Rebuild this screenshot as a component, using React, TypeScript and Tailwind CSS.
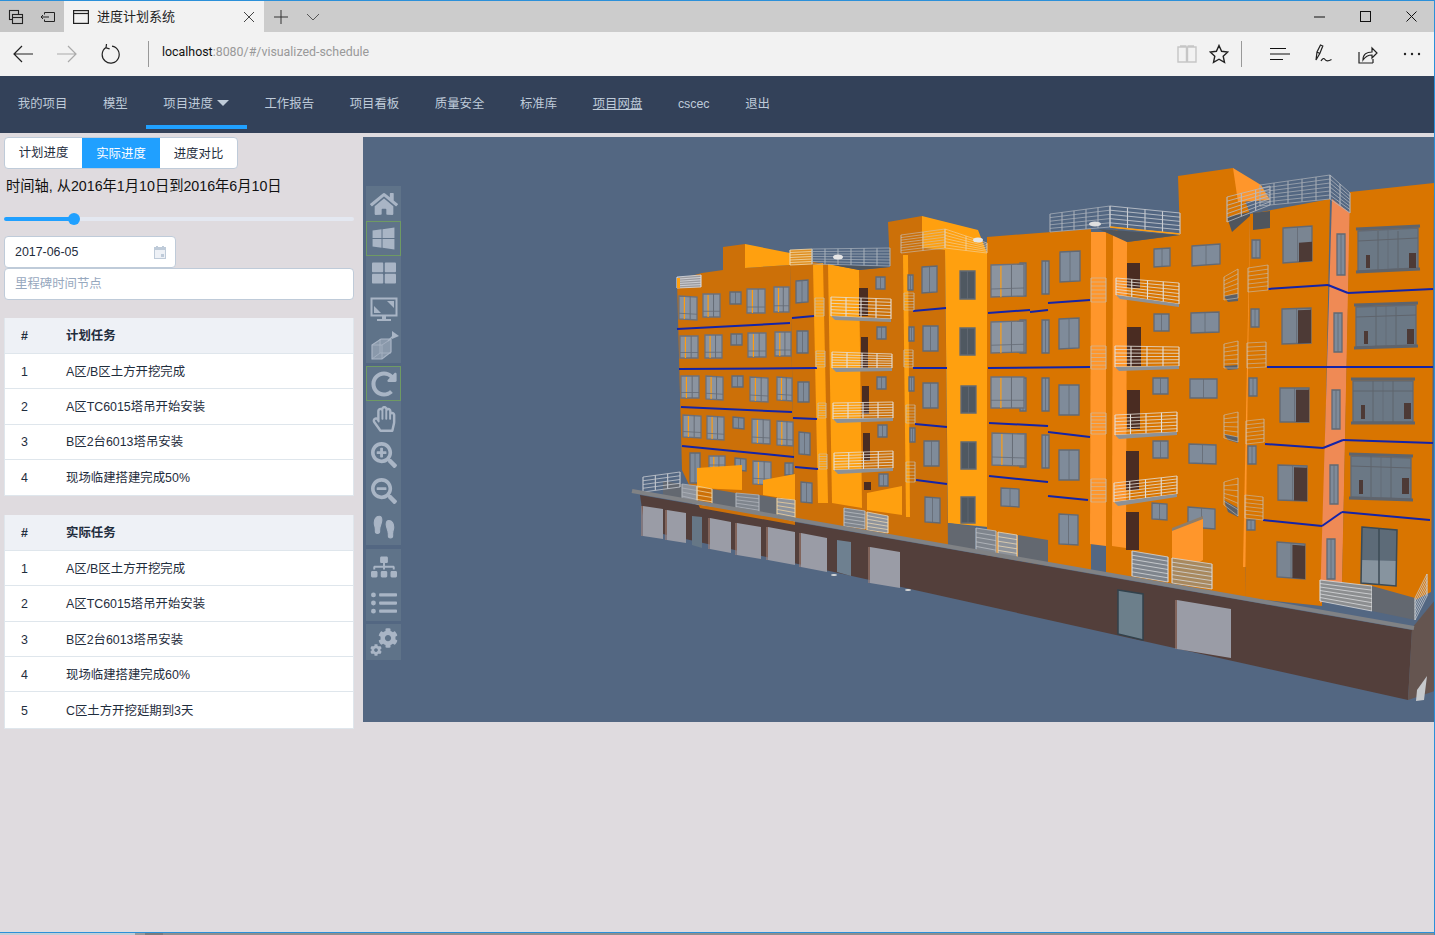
import React from 'react';
import { FaHome, FaWindows, FaThLarge, FaRegHandPaper, FaSearchPlus, FaSearchMinus, FaSitemap, FaListUl, FaCog, FaRedoAlt } from 'react-icons/fa';
import { Footprints } from 'lucide-react';

type Tup = number[];
const DO = '#cc7008', RO = '#d97500', BO = '#ffa00f', BR = '#ff962b', SA = '#ef8a55';
const Poly = ({ p, f, o }: { p: Tup; f: string; o?: number }) => <polygon points={p.join(' ')} fill={f} opacity={o} />;
const Win = ({ x, y, w, h, s = 0, f = '#7f8b9a', d = false, r = false }: { x: number; y: number; w: number; h: number; s?: number; f?: string; d?: boolean; r?: boolean }) => (
  <g>
    <polygon points={`${x},${y} ${x + w},${y + s} ${x + w},${y + h + s} ${x},${y + h}`} fill={f} stroke="#636973" strokeWidth="1.3" />
    {d && <polygon points={`${x + w * 0.55},${y + h * (r ? 0.05 : 0.45) + s * 0.55} ${x + w},${y + h * (r ? 0.05 : 0.45) + s} ${x + w},${y + h + s} ${x + w * 0.55},${y + h + s * 0.55}`} fill="#4d3a36" />}
    <line x1={x + w / 2} y1={y + s / 2} x2={x + w / 2} y2={y + h + s / 2} stroke="#636973" strokeWidth="0.8" />
  </g>
);
const LWin = ({ x, y, w, h, s = 0 }: { x: number; y: number; w: number; h: number; s?: number }) => (
  <g>
    <polygon points={`${x},${y} ${x + w},${y + s} ${x + w},${y + h + s} ${x},${y + h}`} fill="#8b94a0" stroke="#6d7079" strokeWidth="1.3" />
    <line x1={x + w * 0.3} y1={y + 1} x2={x + w * 0.3} y2={y + h} stroke="#ff9d10" strokeWidth="1.2" />
    <line x1={x + w * 0.62} y1={y} x2={x + w * 0.62} y2={y + h} stroke="#666c76" strokeWidth="1" />
    <line x1={x} y1={y + h * 0.75} x2={x + w} y2={y + h * 0.75 + s} stroke="#666c76" strokeWidth="0.8" />
  </g>
);
const Rail = ({ p, n = 6, v = 3, c = '#d9dbe0', b, o = 1 }: { p: Tup; n?: number; v?: number; c?: string; b?: string; o?: number }) => {
  const [x0, y0, x1, y1, x2, y2, x3, y3] = p;
  const out: React.ReactNode[] = [];
  if (b) out.push(<polygon key="b" points={p.join(' ')} fill={b} />);
  for (let i = 0; i <= n; i++) {
    const t = i / n;
    out.push(<line key={'h' + i} x1={x0 + (x3 - x0) * t} y1={y0 + (y3 - y0) * t} x2={x1 + (x2 - x1) * t} y2={y1 + (y2 - y1) * t} stroke={c} strokeWidth="0.8" opacity={o} />);
  }
  for (let i = 0; i <= v; i++) {
    const t = i / v;
    out.push(<line key={'v' + i} x1={x0 + (x1 - x0) * t} y1={y0 + (y1 - y0) * t} x2={x3 + (x2 - x3) * t} y2={y3 + (y2 - y3) * t} stroke={c} strokeWidth="1.1" opacity={o} />);
  }
  return <g>{out}</g>;
};
const Blue = ({ l }: { l: Tup }) => <line x1={l[0]} y1={l[1]} x2={l[2]} y2={l[3]} stroke="#1424a8" strokeWidth="2" />;

const leftWins: Tup[] = [
  [679, 296, 18, 23, 1], [703, 294, 17, 23, 0], [747, 289, 18, 24, 0], [774, 287, 15, 25, 0],
  [680, 336, 18, 22, 0], [705, 335, 17, 23, 0], [748, 333, 18, 24, 0], [775, 332, 16, 24, 0],
  [681, 376, 18, 22, 0], [706, 376, 17, 23, 1], [750, 377, 18, 24, 1], [777, 377, 15, 23, 1],
  [683, 415, 18, 22, 1], [707, 416, 17, 23, 1], [752, 419, 18, 24, 1], [777, 421, 16, 24, 1],
  [753, 461, 18, 23, 1], [709, 456, 16, 12, 0],
];
const plainWins: Tup[] = [
  [730, 292, 11, 12, 0], [731, 334, 11, 11, 0], [732, 376, 11, 11, 0], [733, 417, 11, 11, 1], [735, 458, 11, 12, 1],
  [796, 281, 12, 22, -1], [797, 331, 11, 22, 0], [798, 382, 11, 20, 0], [799, 432, 11, 22, 1], [801, 482, 11, 20, 1],
  [690, 453, 10, 30, 0], [785, 463, 8, 12, 0],
  [876, 277, 9, 12, 0], [877, 327, 9, 12, 0], [877, 377, 9, 12, 0], [878, 425, 9, 12, 0], [879, 474, 9, 12, 0],
  [922, 267, 15, 26, -1], [923, 326, 15, 25, 0], [923, 383, 15, 25, 0], [924, 441, 15, 25, 0], [925, 497, 15, 25, 1],
  [908, 275, 5, 15, 0], [909, 327, 5, 14, 0], [909, 377, 5, 14, 0], [910, 428, 5, 14, 0],
  [1001, 488, 18, 18, 1],
  [1042, 261, 7, 33, 0], [1042, 320, 7, 33, 0], [1042, 378, 7, 33, 0], [1042, 435, 7, 33, 0],
  [1020, 263, 6, 33, 0], [1020, 320, 6, 33, 0], [1020, 378, 6, 33, 0], [1020, 434, 6, 33, 0],
  [1060, 252, 20, 30, -1], [1059, 319, 20, 30, -1], [1059, 385, 20, 30, 0], [1059, 450, 20, 30, 0], [1059, 514, 19, 30, 1],
  [1154, 249, 16, 18, -1], [1154, 314, 15, 17, 0], [1153, 378, 15, 16, 0], [1153, 441, 15, 17, 0], [1152, 503, 15, 16, 1],
  [1192, 246, 28, 20, -2], [1191, 313, 28, 20, -1], [1190, 379, 27, 19, 0], [1189, 444, 27, 19, 1], [1188, 507, 27, 20, 2],
  [1252, 240, 8, 18, 0], [1251, 309, 8, 18, 0], [1249, 378, 8, 18, 0], [1248, 446, 8, 18, 0], [1247, 520, 8, 10, 0],
  [1337, 234, 8, 41, 0], [1334, 313, 8, 39, 0], [1332, 390, 8, 39, 0], [1330, 465, 8, 39, 0], [1327, 539, 8, 40, 0],
];
const darkWins: Tup[] = [[960, 271, 15, 28, 0], [960, 328, 15, 27, 0], [961, 386, 15, 27, 0], [961, 442, 15, 27, 0], [961, 497, 14, 26, 0]];
const bigMid: Tup[] = [[991, 265, 33, 32, -1], [991, 322, 33, 31, -1], [991, 377, 33, 31, 0], [992, 433, 33, 32, 1]];
const medWins: Tup[] = [[1283, 228, 29, 35, -2], [1282, 309, 29, 35, -1], [1280, 388, 29, 34, 0], [1278, 465, 29, 35, 1], [1277, 542, 28, 35, 2]];
const bigWins: Tup[] = [[1358, 231, 60, 40, -3], [1356, 307, 60, 40, -2], [1353, 381, 60, 41, 0], [1351, 456, 60, 41, 2]];
const doors: Tup[] = [
  [859, 288, 9, 28], [861, 337, 7, 32], [862, 386, 7, 28], [863, 433, 7, 28], [864, 482, 7, 8],
  [1127, 263, 13, 25], [1127, 327, 14, 39], [1127, 390, 13, 39], [1126, 451, 13, 39], [1126, 512, 13, 38],
];
const blues: Tup[] = [
  [677, 329, 790, 323], [792, 318, 814, 316], [679, 369, 817, 368], [681, 407, 792, 412], [793, 418, 817, 419], [682, 446, 794, 457], [795, 467, 818, 469],
  [913, 311, 946, 308], [913, 368, 947, 368], [915, 424, 947, 427], [916, 480, 947, 484],
  [988, 313, 1030, 310], [1030, 312, 1048, 310], [1048, 303, 1090, 300], [988, 368, 1090, 367], [989, 423, 1048, 426], [1048, 432, 1090, 437], [989, 476, 1048, 482], [1048, 496, 1088, 500],
  [1268, 289, 1328, 285], [1328, 285, 1348, 293], [1348, 293, 1433, 289], [1267, 367, 1433, 367],
  [1265, 444, 1323, 448], [1323, 448, 1343, 440], [1343, 440, 1433, 443], [1263, 520, 1322, 526], [1322, 526, 1342, 512], [1342, 512, 1430, 520],
];
const balc: Tup[] = [
  [831, 297, 891, 299, 891, 319, 831, 316], [832, 352, 892, 354, 892, 368, 832, 368], [833, 403, 893, 402, 893, 418, 833, 419], [834, 453, 893, 451, 893, 468, 834, 470],
  [1116, 278, 1179, 283, 1179, 304, 1116, 295], [1115, 346, 1179, 347, 1179, 366, 1115, 367], [1115, 415, 1177, 412, 1177, 432, 1115, 435], [1114, 483, 1177, 476, 1177, 494, 1114, 502],
];
const sideBalc: Tup[] = [
  [1091, 278, 1106, 278, 1106, 302, 1091, 302], [1091, 346, 1106, 346, 1106, 369, 1091, 369], [1091, 413, 1106, 413, 1106, 434, 1091, 434], [1091, 479, 1106, 479, 1106, 502, 1091, 502],
  [1224, 277, 1238, 269, 1238, 298, 1224, 300], [1224, 344, 1238, 341, 1238, 368, 1224, 368], [1224, 415, 1238, 412, 1238, 442, 1224, 438], [1224, 482, 1238, 478, 1238, 516, 1224, 505],
  [1248, 268, 1268, 265, 1268, 290, 1248, 292], [1247, 343, 1266, 342, 1266, 367, 1247, 368], [1246, 421, 1264, 419, 1264, 442, 1246, 444], [1245, 495, 1263, 497, 1263, 520, 1245, 518],
  [904, 293, 914, 293, 914, 310, 904, 310], [904, 350, 913, 350, 913, 367, 904, 367], [906, 405, 915, 405, 915, 423, 906, 423], [906, 462, 915, 462, 915, 482, 906, 482],
  [815, 298, 824, 298, 824, 316, 815, 316], [816, 351, 825, 351, 825, 367, 816, 367], [818, 403, 826, 403, 826, 418, 818, 418], [819, 454, 827, 454, 827, 469, 819, 469],
];
const roundBottoms: Tup[] = [[1224, 296, 1238, 294, 1238, 301, 1228, 302], [1224, 366, 1238, 365, 1238, 369, 1228, 370], [1224, 434, 1238, 437, 1238, 443, 1228, 440], [1224, 500, 1238, 508, 1238, 517, 1228, 512]];
const garages: Tup[] = [[643, 506, 20, 3, 30], [667, 510, 19, 3, 30], [710, 518, 21, 4, 31], [737, 523, 24, 4, 32], [768, 527, 27, 5, 33], [801, 533, 26, 5, 34], [870, 547, 30, 5, 36], [1177, 600, 54, 9, 49]];

function Building() {
  return (
    <svg className="absolute inset-0" width="1072" height="585" viewBox="363 137 1072 585">
      {/* base */}
      <Poly p={[640, 495, 1412, 630, 1408, 700, 645, 530]} f="#533f3b" />
      <Poly p={[1412, 628, 1435, 600, 1435, 691, 1408, 700]} f="#655550" />
      <Poly p={[1417, 690, 1427, 676, 1424, 700, 1416, 701]} f="#c6c9cc" />
      {garages.map((g, i) => <g key={i}>
        <line x1={g[0] - 1} y1={g[1]} x2={g[0] - 1} y2={g[1] + g[4]} stroke="#b08a7c" strokeWidth="1" />
        <Poly p={[g[0], g[1], g[0] + g[2], g[1] + g[3], g[0] + g[2], g[1] + g[3] + g[4], g[0], g[1] + g[4]]} f="#9a9ca6" />
      </g>)}
      <Poly p={[692, 516, 702, 517, 702, 548, 692, 545]} f="#667786" />
      <Poly p={[837, 540, 851, 542, 851, 576, 837, 572]} f="#6e8090" />
      <Poly p={[1118, 590, 1143, 594, 1143, 640, 1118, 634]} f="#6c7f8b" />
      <polygon points="1118,590 1143,594 1143,640 1118,634" fill="none" stroke="#32424c" strokeWidth="1.5" />
      <ellipse cx="834" cy="575" rx="3" ry="1" fill="#d8d8d8" />
      <ellipse cx="908" cy="590" rx="3" ry="1" fill="#d8d8d8" />
      {/* walls */}
      <Poly p={[677, 280, 702, 273, 723, 270, 723, 247, 745, 244, 745, 268, 790, 265, 795, 525, 700, 508, 682, 470]} f={DO} />
      <Poly p={[745, 244, 790, 253, 790, 265, 745, 268]} f={BO} />
      <Poly p={[790, 265, 813, 262, 859, 270, 890, 267, 888, 222, 922, 216, 922, 248, 945, 250, 948, 547, 795, 520]} f={DO} />
      <Poly p={[813, 265, 823, 263, 828, 503, 818, 503]} f={BO} />
      <Poly p={[828, 264, 859, 270, 862, 508, 832, 503]} f={BO} />
      <Poly p={[903, 255, 908, 255, 910, 517, 906, 517]} f={BO} />
      <Poly p={[922, 216, 978, 230, 987, 253, 988, 527, 948, 523, 945, 250, 922, 248]} f={BO} />
      <Poly p={[987, 237, 1091, 229, 1091, 573, 987, 555]} f={RO} />
      <Poly p={[1106, 232, 1117, 230, 1127, 242, 1180, 235, 1178, 176, 1233, 168, 1250, 214, 1245, 600, 1106, 575]} f={RO} />
      <Poly p={[1091, 232, 1106, 232, 1106, 546, 1090, 544]} f={BR} />
      <Poly p={[1113, 230, 1127, 242, 1126, 548, 1112, 546]} f={BR} />
      <Poly p={[1233, 168, 1261, 185, 1270, 200, 1238, 202]} f={BR} />
      <Poly p={[1250, 214, 1253, 214, 1246, 567, 1243, 567]} f={BR} />
      <Poly p={[1250, 214, 1330, 199, 1322, 606, 1245, 598]} f={RO} />
      <Poly p={[1332, 199, 1350, 213, 1342, 590, 1320, 603]} f={SA} />
      <Poly p={[1350, 192, 1434, 183, 1431, 592, 1415, 600, 1342, 582]} f={RO} />
      {/* roof rails */}
      <Rail p={[677, 277, 701, 275, 701, 287, 677, 288]} n={5} v={1} b="#9b9ba0" />
      <Poly p={[677, 278, 680, 278, 680, 288, 677, 288]} f={BO} />
      <Rail p={[790, 250, 812, 249, 812, 264, 790, 265]} n={6} v={1} c="#f0d9ae" b="#e08f20" />
      <Rail p={[812, 249, 890, 248, 890, 266, 812, 264]} n={6} v={6} c="#aab2bc" o={0.9} />
      <Poly p={[833, 265, 890, 267, 859, 270]} f="#4f555d" />
      <ellipse cx="838" cy="257" rx="5" ry="2.5" fill="#e6e6e6" />
      <Rail p={[901, 235, 945, 229, 945, 248, 901, 253]} n={7} v={2} c="#c5c7cb" o={0.7} />
      <Rail p={[945, 229, 987, 243, 987, 253, 945, 248]} n={6} v={2} c="#f2d2a0" o={0.8} />
      <ellipse cx="978" cy="240" rx="5" ry="2.5" fill="#e6e6e6" />
      <Rail p={[1050, 214, 1110, 206, 1110, 227, 1050, 232]} n={5} v={5} c="#aeb5be" o={0.9} />
      <Rail p={[1110, 206, 1180, 213, 1180, 234, 1110, 227]} n={5} v={4} c="#c8ccd2" />
      <Poly p={[1098, 229, 1180, 235, 1127, 242, 1105, 232]} f="#4f555d" />
      <ellipse cx="1095" cy="224" rx="6" ry="2.5" fill="#e0e0e0" />
      <line x1="1110" y1="227" x2="1180" y2="234" stroke="#ff9d10" strokeWidth="1.5" />
      <Rail p={[1260, 185, 1330, 175, 1330, 199, 1260, 206]} n={6} v={5} c="#a3a9b2" />
      <Rail p={[1330, 175, 1350, 193, 1350, 213, 1330, 199]} n={6} v={2} c="#aeb4bd" />
      <Poly p={[1227, 217, 1250, 212, 1250, 216, 1232, 232]} f="#4f555d" />
      <Poly p={[1253, 213, 1270, 211, 1270, 228, 1253, 230]} f="#4f555d" />
      <Rail p={[1227, 197, 1270, 186, 1270, 205, 1227, 222]} n={6} v={3} c="#b7bbc1" />
      {/* windows */}
      {leftWins.map((w, i) => <LWin key={i} x={w[0]} y={w[1]} w={w[2]} h={w[3]} s={w[4]} />)}
      {plainWins.map((w, i) => <Win key={i} x={w[0]} y={w[1]} w={w[2]} h={w[3]} s={w[4]} />)}
      {darkWins.map((w, i) => <Win key={i} x={w[0]} y={w[1]} w={w[2]} h={w[3]} f="#4f5861" />)}
      {bigMid.map((w, i) => <LWin key={i} x={w[0]} y={w[1]} w={w[2]} h={w[3]} s={w[4]} />)}
      {medWins.map((w, i) => <Win key={i} x={w[0]} y={w[1]} w={w[2]} h={w[3]} s={w[4]} d r={i > 0} f="#7a8592" />)}
      {bigWins.map((w, i) => <g key={i}>
        <Win x={w[0]} y={w[1]} w={w[2]} h={w[3]} s={w[4]} f="#6b7885" />
        <line x1={w[0] + 20} y1={w[1]} x2={w[0] + 20} y2={w[1] + w[3]} stroke="#5f646c" strokeWidth="1" />
        <line x1={w[0] + 40} y1={w[1]} x2={w[0] + 40} y2={w[1] + w[3] + w[4]} stroke="#5f646c" strokeWidth="1" />
        <line x1={w[0]} y1={w[1] + 10} x2={w[0] + w[2]} y2={w[1] + 10 + w[4]} stroke="#5f646c" strokeWidth="1" />
        <line x1={w[0] - 2} y1={w[1] - 2} x2={w[0] + w[2] + 2} y2={w[1] - 2 + w[4]} stroke="#5f646c" strokeWidth="3" />
        <line x1={w[0] - 2} y1={w[1] + w[3] + 1} x2={w[0] + w[2] + 2} y2={w[1] + w[3] + 1 + w[4]} stroke="#5f646c" strokeWidth="3" />
        <Poly p={[w[0] + w[2] - 9, w[1] + 22, w[0] + w[2] - 2, w[1] + 22, w[0] + w[2] - 2, w[1] + w[3] - 3, w[0] + w[2] - 9, w[1] + w[3] - 3]} f="#4d3a36" />
        <Poly p={[w[0] + 8, w[1] + 24, w[0] + 12, w[1] + 24, w[0] + 12, w[1] + w[3] - 3, w[0] + 8, w[1] + w[3] - 3]} f="#4d3a36" />
      </g>)}
      <Poly p={[1362, 527, 1397, 530, 1396, 586, 1361, 583]} f="#5d6b78" />
      <Poly p={[1362, 560, 1397, 561, 1396, 586, 1361, 583]} f="#87949f" />
      <line x1="1379" y1="529" x2="1379" y2="585" stroke="#3b4a55" strokeWidth="1.5" />
      <polygon points="1362,527 1397,530 1396,586 1361,583" fill="none" stroke="#3b4a55" strokeWidth="1.5" />
      {doors.map((d, i) => <Poly key={i} p={[d[0], d[1], d[0] + d[2], d[1], d[0] + d[2], d[1] + d[3], d[0], d[1] + d[3]]} f="#4a2c22" />)}
      {blues.map((b, i) => <Blue key={i} l={b} />)}
      {roundBottoms.map((b, i) => <Poly key={i} p={b} f="#5b6068" />)}
      {balc.map((b, i) => <g key={i}>
        <Rail p={b} n={6} v={4} c="#e3dfd8" />
        <Poly p={[b[6], b[7], b[4], b[5], b[4], b[5] + 3, b[6] + 4, b[7] + 4]} f="#8d9196" />
      </g>)}
      {sideBalc.map((b, i) => <Rail key={i} p={b} n={6} v={1} c="#c4c0b8" o={0.75} />)}
      {/* low walls */}
      <Poly p={[697, 468, 742, 465, 742, 490, 697, 488]} f={BO} />
      <Poly p={[763, 480, 795, 474, 795, 500, 763, 495]} f={BO} />
      <Poly p={[867, 493, 902, 486, 902, 515, 867, 510]} f={BO} />
      <Poly p={[1172, 530, 1203, 518, 1203, 560, 1172, 577]} f={BR} />
      <Poly p={[1172, 528, 1203, 516, 1203, 519, 1172, 531]} f="#8e7e6b" />
      {/* terrace */}
      <Poly p={[663, 481, 682, 484, 682, 500, 663, 496]} f="#636870" />
      <Rail p={[643, 477, 680, 472, 680, 487, 643, 492]} n={4} v={3} c="#c5c9cf" />
      <Poly p={[712, 489, 736, 493, 736, 510, 712, 506]} f="#636870" />
      <Poly p={[759, 495, 777, 498, 777, 517, 759, 514]} f="#636870" />
      <Rail p={[682, 484, 697, 486, 697, 504, 682, 500]} n={4} v={1} c="#aeb3ba" b="#8e939b" />
      <Rail p={[697, 486, 712, 489, 712, 506, 697, 504]} n={4} v={1} c="#eccf9e" />
      <Rail p={[736, 493, 759, 495, 759, 514, 736, 510]} n={5} v={1} c="#aeb3ba" b="#7f858d" />
      <Rail p={[777, 498, 795, 500, 795, 521, 777, 517]} n={5} v={1} c="#eccf9e" b="#8e939b" />
      <Rail p={[844, 508, 865, 511, 865, 529, 844, 526]} n={5} v={1} c="#b9bdc2" b="#7f858d" />
      <Rail p={[867, 512, 888, 516, 888, 533, 867, 530]} n={5} v={1} c="#e8d5b5" b="#8e939b" />
      <Poly p={[948, 523, 975, 527, 975, 551, 948, 546]} f="#636870" />
      <Rail p={[976, 528, 996, 531, 996, 555, 976, 551]} n={5} v={1} c="#b9bdc2" b="#7f858d" />
      <Rail p={[998, 532, 1017, 535, 1017, 558, 998, 555]} n={5} v={1} c="#e8d5b5" b="#8e939b" />
      <Poly p={[1018, 535, 1048, 540, 1048, 564, 1018, 559]} f="#636870" />
      <Rail p={[1132, 551, 1168, 557, 1168, 582, 1132, 576]} n={6} v={1} c="#d6d8da" b="#7f858d" />
      <Rail p={[1172, 558, 1212, 564, 1212, 589, 1172, 583]} n={6} v={1} c="#d6d8da" b="#a8895f" />
      <Rail p={[1320, 580, 1372, 586, 1372, 611, 1320, 601]} n={6} v={1} c="#d9dbdd" b="#8c8e90" />
      <Poly p={[1372, 586, 1415, 598, 1415, 620, 1372, 611]} f="#636870" />
      <Rail p={[1415, 598, 1427, 574, 1427, 596, 1415, 620]} n={6} v={1} c="#c8cbd0" />
      {/* slab */}
      <line x1="632" y1="491" x2="1414" y2="628" stroke="#808285" strokeWidth="4" />
    </svg>
  );
}

const ToolIcon = ({ children, hi, h = 'h-[36px]' }: { children: React.ReactNode; hi?: boolean; h?: string }) => (
  <div className={`flex ${h} w-[35px] items-center justify-center text-[#a9b5c5] ${hi ? 'border-[1.5px] border-[#6f9a63]' : ''}`}>{children}</div>
);
const Group = ({ children }: { children: React.ReactNode }) => <div className="flex w-[35px] flex-col bg-[#5f7389]">{children}</div>;

function Toolbar() {
  return (
    <div className="absolute left-[3px] top-[49px] flex flex-col">
      <Group>
        <ToolIcon h="h-[35px]"><FaHome size={28} /></ToolIcon>
        <ToolIcon hi h="h-[35px]"><FaWindows size={25} /></ToolIcon>
        <ToolIcon h="h-[34px]"><FaThLarge size={24} /></ToolIcon>
        <ToolIcon h="h-[39px]">
          <svg width="28" height="26" viewBox="0 0 28 26"><rect x="1.5" y="1.5" width="25" height="17" fill="none" stroke="currentColor" strokeWidth="2" /><polygon points="4,16 4,9 11,16" fill="currentColor" /><polygon points="24,4 24,11 17,4" fill="currentColor" /><rect x="12" y="19" width="4" height="3" fill="currentColor" /><rect x="7" y="22" width="14" height="2" fill="currentColor" /></svg>
        </ToolIcon>
        <ToolIcon h="h-[34px]">
          <svg width="30" height="30" viewBox="0 0 30 30"><polygon points="3,14 12,8 22,8 22,21 13,28 3,28" fill="#8a99ab" stroke="currentColor" strokeWidth="1.2" /><path d="M3 14h10v14M13 14l9-6M3 28l8-6h11M11 8v14" fill="none" stroke="currentColor" strokeWidth="0.8" /><path d="M19 10L26 3" stroke="currentColor" strokeWidth="1.2" /><polygon points="23,0 30,5 23,8" fill="currentColor" /></svg>
        </ToolIcon>
      </Group>
      <div className="mt-[3px]">
        <Group>
          <ToolIcon hi h="h-[35px]"><FaRedoAlt size={26} /></ToolIcon>
          <ToolIcon><FaRegHandPaper size={26} /></ToolIcon>
          <ToolIcon><FaSearchPlus size={26} /></ToolIcon>
          <ToolIcon><FaSearchMinus size={26} /></ToolIcon>
          <ToolIcon><Footprints size={26} fill="currentColor" strokeWidth={1} /></ToolIcon>
        </Group>
      </div>
      <div className="mt-[4px]">
        <Group>
          <ToolIcon><FaSitemap size={26} /></ToolIcon>
          <ToolIcon><FaListUl size={26} /></ToolIcon>
        </Group>
      </div>
      <div className="mt-[3px]">
        <Group>
          <ToolIcon>
            <span className="relative block h-[28px] w-[28px]">
              <FaCog size={20} className="absolute right-0 top-0" />
              <FaCog size={12} className="absolute bottom-0 left-0" />
            </span>
          </ToolIcon>
        </Group>
      </div>
    </div>
  );
}

const S = ({ w = 20, h = 20, c = '#222', children, sw = 1.2 }: { w?: number; h?: number; c?: string; children: React.ReactNode; sw?: number }) => (
  <svg width={w} height={h} viewBox={`0 0 ${w} ${h}`} fill="none" stroke={c} strokeWidth={sw}>{children}</svg>
);

function TabBar() {
  return (
    <div className="flex h-[31px] shrink-0 bg-[#cccccc]">
      <div className="flex w-[64px] bg-[#c6c6c6]">
        <div className="flex w-[32px] items-center justify-center"><S w={16} h={16} sw={1.1}><rect x="1.5" y="1.5" width="9" height="9" /><rect x="4.5" y="5.5" width="10" height="9" fill="#c6c6c6" /><path d="M4.5 8.5h10" /></S></div>
        <div className="flex w-[32px] items-center justify-center"><S w={16} h={12} sw={1}><path d="M4.5 1.5h10v9h-10M4.5 1.5v2M4.5 8.5v2M1 6h8M3 4L1 6l2 2" /></S></div>
      </div>
      <div className="flex w-[200px] items-center bg-[#f2f2f2] pl-[9px] text-[13px] text-[#222]">
        <S w={16} h={14}><rect x="0.6" y="0.6" width="14.8" height="12.8" /><path d="M1 3.5h14" /></S>
        <span className="ml-[8px] w-[146px]">进度计划系统</span>
        <S w={12} h={12} c="#444" sw={1}><path d="M1 1l10 10M11 1L1 11" /></S>
      </div>
      <div className="flex w-[34px] items-center justify-center"><S w={14} h={14} c="#333" sw={1}><path d="M7 0v14M0 7h14" /></S></div>
      <div className="flex w-[30px] items-center justify-center"><S w={14} h={8} c="#555" sw={1}><path d="M1 1l6 6 6-6" /></S></div>
      <div className="flex-1" />
      <div className="flex w-[46px] items-center justify-center"><S w={11} h={2} c="#111" sw={1}><path d="M0 1h11" /></S></div>
      <div className="flex w-[46px] items-center justify-center"><S w={11} h={11} c="#111" sw={1}><rect x="0.5" y="0.5" width="10" height="10" /></S></div>
      <div className="flex w-[46px] items-center justify-center"><S w={11} h={11} c="#111" sw={1}><path d="M0.5 0.5l10 10M10.5 0.5l-10 10" /></S></div>
    </div>
  );
}

function AddressBar() {
  return (
    <div className="flex h-[44px] shrink-0 items-center bg-[#f2f2f2] font-['Roboto','Noto_Sans_CJK_SC',sans-serif]">
      <div className="flex w-[46px] items-center justify-center"><S w={20} h={18} sw={1.2}><path d="M20 9H1M9 1L1 9l8 8" /></S></div>
      <div className="flex w-[42px] items-center justify-center"><S w={20} h={18} c="#aaa" sw={1.2}><path d="M0 9h19M11 1l8 8-8 8" /></S></div>
      <div className="flex w-[44px] items-center justify-center"><S w={20} h={20} sw={1.2}><path d="M6 3.5A8.5 8.5 0 1 0 12 2.2M6.5 0L6 3.8l3.6 1" /></S></div>
      <div className="ml-[16px] h-[26px] w-px bg-[#999]" />
      <div className="ml-[13px] mb-[4px] text-[12.4px] text-[#111]">localhost<span className="text-[#999]">:8080/#/visualized-schedule</span></div>
      <div className="flex-1" />
      <div className="flex w-[32px] items-center justify-center"><S w={20} h={18} c="#c6c6c6" sw={1.4}><path d="M1 2h8.5v15H1zM10.5 2H19v15h-8.5zM3 1h6.5M10.5 1H17" /></S></div>
      <div className="flex w-[32px] items-center justify-center"><S w={20} h={20} sw={1.4}><path d="M10 1.5l2.6 5.8 6.2.7-4.6 4.2 1.3 6.2L10 15.2l-5.5 3.2 1.3-6.2L1.2 8l6.2-.7z" /></S></div>
      <div className="ml-[6px] h-[26px] w-px bg-[#999]" />
      <div className="ml-[16px] flex w-[44px] items-center justify-center"><S w={20} h={14} sw={1.2} c="#111"><path d="M0 1.5h16M0 7h20M0 12.5h13" /></S></div>
      <div className="flex w-[44px] items-center justify-center"><S w={18} h={20}><path d="M1 16L2 8 5.5 1l2.3 1-3 7.5zM2 8l2.8 1.5M1 16l3.8-6.500M6 17c1.500-3 3-3 4-1.500s3 2 6.500 0" /></S></div>
      <div className="flex w-[43px] items-center justify-center"><S w={20} h={20}><path d="M1 8v11h14M1 19h14M15 15v4M5 16c0-6 4-8 9-8V4l5 5-5 5v-3c-5 0-7 2-9 5z" /></S></div>
      <div className="flex w-[45px] items-center justify-center"><S w={18} h={4} sw={0}><circle cx="2" cy="2" r="1.2" fill="#222" /><circle cx="9" cy="2" r="1.2" fill="#222" /><circle cx="16" cy="2" r="1.2" fill="#222" /></S></div>
    </div>
  );
}

const navItems = ['我的项目', '模型', '项目进度', '工作报告', '项目看板', '质量安全', '标准库', '项目网盘', 'cscec', '退出'];

function Nav() {
  return (
    <div className="flex h-[57px] shrink-0 bg-[#334159] pb-[4px] text-[12.4px] text-[#bfcbd9]">
      {navItems.map((n) => (
        <div key={n} className={`flex items-center border-y-[4px] border-t-transparent px-[17.8px] pt-[3px] ${n === '项目进度' ? 'border-b-[#20a0ff]' : 'border-b-transparent'} ${n === '项目网盘' ? 'underline' : ''}`}>
          {n}
          {n === '项目进度' && <span className="mb-[3px] ml-[4px] h-0 w-0 border-x-[6px] border-t-[6px] border-x-transparent border-t-[#bfcbd9]" />}
        </div>
      ))}
    </div>
  );
}

const Seg = ({ label, on }: { label: string; on?: boolean }) => (
  <div className={`flex h-[32px] items-center justify-center pt-[1px] ${on ? 'w-[78px] bg-[#20a0ff] text-white' : 'flex-1 text-[#1f2d3d]'}`}>{label}</div>
);

function TaskTable({ title, rows }: { title: string; rows: string[] }) {
  return (
    <div className="ml-[4px] w-[350px] border-x border-b border-[#dfe6ec] bg-white text-[12.4px] text-[#1f2d3d]">
      <div className="flex h-[36px] items-center border-b border-[#dfe6ec] bg-[#eef1f6] pt-[2px] font-bold">
        <div className="w-[61px] pl-[16px]">#</div>
        <div>{title}</div>
      </div>
      {rows.map((r, i) => (
        <div key={i} className={`flex h-[35.3px] items-center pt-[2px] ${i < rows.length - 1 ? 'border-b border-[#dfe6ec]' : ''}`}>
          <div className="w-[61px] pl-[16px]">{i + 1}</div>
          <div>{r}</div>
        </div>
      ))}
    </div>
  );
}

function Side() {
  return (
    <div className="w-[363px] shrink-0">
      <div className="ml-[4px] flex h-[32px] w-[234px] overflow-hidden rounded-[4px] border border-[#bfcbd9] bg-white text-[12.4px]">
        <div className="flex w-[77px] items-center justify-center pt-[1px] text-[#1f2d3d]">计划进度</div>
        <Seg label="实际进度" on />
        <Seg label="进度对比" />
      </div>
      <div className="ml-[6px] mt-[6px] h-[22px] text-[14.25px] leading-[22px] text-[#111]">时间轴, 从2016年1月10日到2016年6月10日</div>
      <div className="relative ml-[4px] mt-[20px] h-[4px] w-[350px] rounded-full bg-[#e4e8f1]">
        <div className="h-[4px] w-[70px] rounded-full bg-[#20a0ff]" />
        <div className="absolute left-[64px] top-[-4px] h-[12px] w-[12px] rounded-full bg-[#20a0ff]" />
      </div>
      <div className="ml-[4px] mt-[15px] flex h-[32px] w-[172px] items-center justify-between rounded-[4px] border border-[#bfcbd9] bg-white pl-[10px] pr-[9px] text-[12.4px] text-[#1f2d3d]">
        2017-06-05
        <svg width="12" height="13" viewBox="0 0 12 13"><path d="M0 1h2V0h2v1h4V0h2v1h2v12H0z" fill="#bfcbd9" /><rect x="1" y="4" width="10" height="8" fill="#eef1f6" /><rect x="7" y="8" width="3" height="3" fill="#bfcbd9" /></svg>
      </div>
      <div className="ml-[4px] flex h-[32px] w-[350px] items-center rounded-[4px] border border-[#bfcbd9] bg-white pl-[10px] text-[12.4px] text-[#97a8be]">里程碑时间节点</div>
      <div className="mt-[18px]">
        <TaskTable title="计划任务" rows={['A区/B区土方开挖完成', 'A区TC6015塔吊开始安装', 'B区2台6013塔吊安装', '现场临建搭建完成50%']} />
      </div>
      <div className="mt-[19px]">
        <TaskTable title="实际任务" rows={['A区/B区土方开挖完成', 'A区TC6015塔吊开始安装', 'B区2台6013塔吊安装', '现场临建搭建完成60%', 'C区土方开挖延期到3天']} />
      </div>
    </div>
  );
}

export default function App() {
  return (
    <div className="flex h-[935px] w-[1435px] flex-col overflow-hidden border-r border-t border-[#2b90d9] bg-[#dfdbdf] font-['Liberation_Sans','Noto_Sans_CJK_SC',sans-serif]">
      <TabBar />
      <AddressBar />
      <Nav />
      <div className="mt-[4px] flex flex-1">
        <Side />
        <div className="relative h-[585px] flex-1 overflow-hidden bg-[#536782]">
          <Building />
          <Toolbar />
        </div>
      </div>
      <div className="h-px shrink-0 bg-[#2b90d9]" />
      <div className="flex h-[2px] shrink-0 bg-[#8f8f8f]">
        <div className="w-[135px] bg-[#c4cdd6]" />
        <div className="w-[10px] bg-[#9a9a9a]" />
        <div className="w-[18px] bg-[#7c7c7c]" />
      </div>
    </div>
  );
}
